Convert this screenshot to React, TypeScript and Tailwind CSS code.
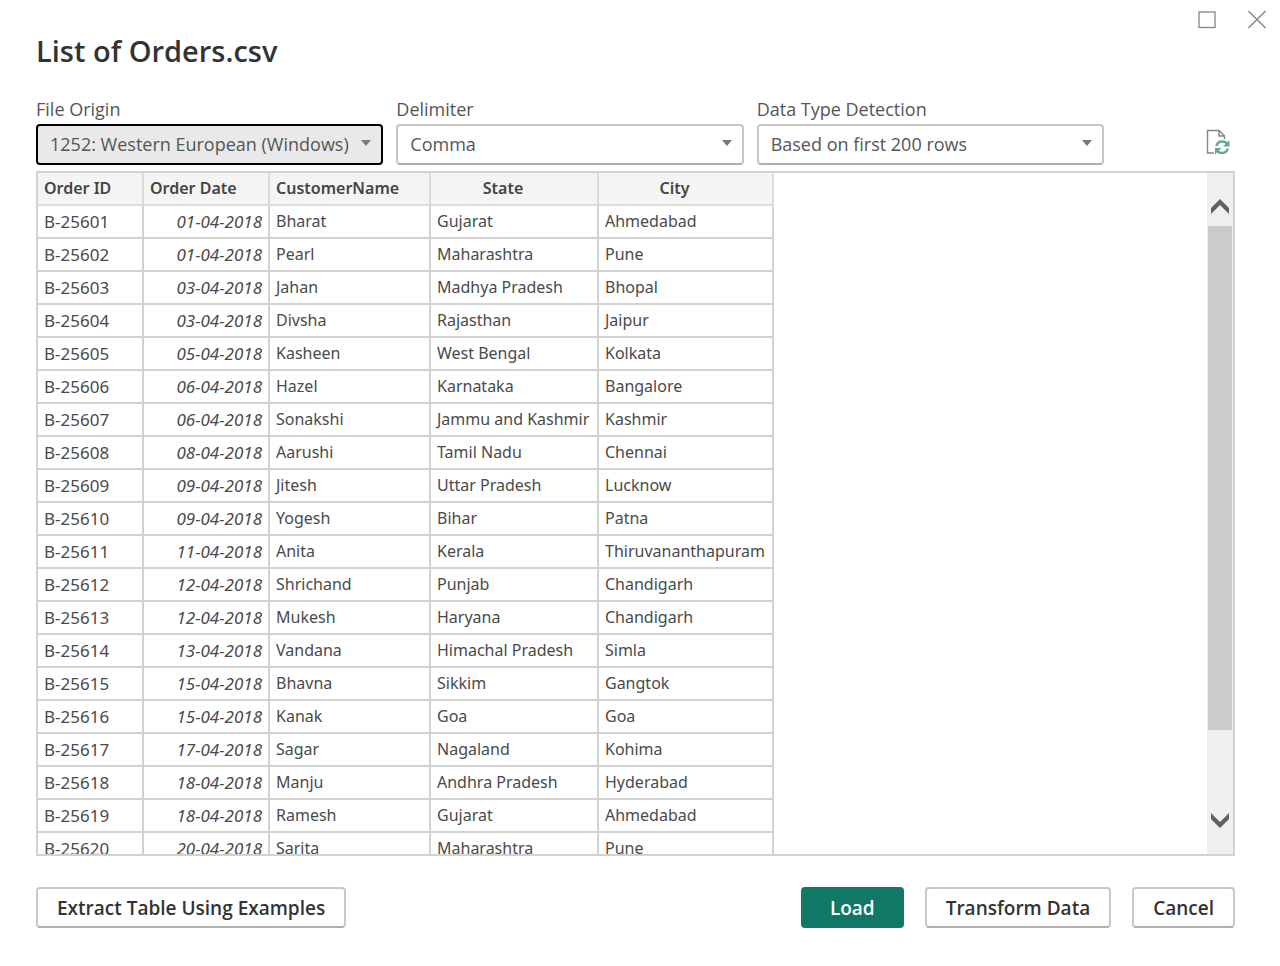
import type { ReactNode } from "react";

type Order = [id: string, date: string, customer: string, state: string, city: string];

const orders: Order[] = [
  ["B-25601", "01-04-2018", "Bharat", "Gujarat", "Ahmedabad"],
  ["B-25602", "01-04-2018", "Pearl", "Maharashtra", "Pune"],
  ["B-25603", "03-04-2018", "Jahan", "Madhya Pradesh", "Bhopal"],
  ["B-25604", "03-04-2018", "Divsha", "Rajasthan", "Jaipur"],
  ["B-25605", "05-04-2018", "Kasheen", "West Bengal", "Kolkata"],
  ["B-25606", "06-04-2018", "Hazel", "Karnataka", "Bangalore"],
  ["B-25607", "06-04-2018", "Sonakshi", "Jammu and Kashmir", "Kashmir"],
  ["B-25608", "08-04-2018", "Aarushi", "Tamil Nadu", "Chennai"],
  ["B-25609", "09-04-2018", "Jitesh", "Uttar Pradesh", "Lucknow"],
  ["B-25610", "09-04-2018", "Yogesh", "Bihar", "Patna"],
  ["B-25611", "11-04-2018", "Anita", "Kerala", "Thiruvananthapuram"],
  ["B-25612", "12-04-2018", "Shrichand", "Punjab", "Chandigarh"],
  ["B-25613", "12-04-2018", "Mukesh", "Haryana", "Chandigarh"],
  ["B-25614", "13-04-2018", "Vandana", "Himachal Pradesh", "Simla"],
  ["B-25615", "15-04-2018", "Bhavna", "Sikkim", "Gangtok"],
  ["B-25616", "15-04-2018", "Kanak", "Goa", "Goa"],
  ["B-25617", "17-04-2018", "Sagar", "Nagaland", "Kohima"],
  ["B-25618", "18-04-2018", "Manju", "Andhra Pradesh", "Hyderabad"],
  ["B-25619", "18-04-2018", "Ramesh", "Gujarat", "Ahmedabad"],
  ["B-25620", "20-04-2018", "Sarita", "Maharashtra", "Pune"],
];

const columns = [
  { name: "Order ID", width: "w-[106px]", align: "text-left", cell: "pl-[6px] text-[17px]" },
  { name: "Order Date", width: "w-[126px]", align: "text-left", cell: "pr-[6px] text-right text-[17px] italic" },
  { name: "CustomerName", width: "w-[161px]", align: "text-left", cell: "pl-[6px] text-[16px]" },
  { name: "State", width: "w-[168px]", align: "text-center pr-7", cell: "pl-[6px] text-[16px]" },
  { name: "City", width: "w-[175px]", align: "text-center pr-7", cell: "pl-[6px] text-[16px]" },
];

function SelectField({ id, label, value, focused = false }: { id: string; label: string; value: string; focused?: boolean }) {
  return (
    <div className="flex min-w-0 flex-1 flex-col">
      <label htmlFor={id} className="text-[18px] leading-[30px] text-[#555]">
        {label}
      </label>
      <div className="relative">
        <select
          id={id}
          className={
            "h-[41px] w-full appearance-none rounded-[4px] border-2 pl-3 pr-8 text-[18px] text-[#555] outline-none " +
            (focused ? "border-black bg-[#e9e9e9]" : "border-[#c6c6c6] border-b-[#b0b0b0] bg-white")
          }
        >
          <option>{value}</option>
        </select>
        <svg className="pointer-events-none absolute right-3 top-4 h-[6px] w-[10px]" viewBox="0 0 10 6" aria-hidden="true">
          <path d="M0 0H10L5 6Z" fill="#7a7a7a" />
        </svg>
      </div>
    </div>
  );
}

function ActionButton({ children, primary = false }: { children: ReactNode; primary?: boolean }) {
  return (
    <button
      type="button"
      className={
        "h-[41px] rounded-[4px] border-2 pt-px text-[19px] font-semibold " +
        (primary
          ? "border-[#117865] bg-[#117865] px-[27px] text-white"
          : "border-[#c8c8c8] border-b-[#b0b0b0] bg-white px-[19px] text-[#333]")
      }
    >
      {children}
    </button>
  );
}

export default function App() {
  return (
    <main className="flex h-screen flex-col bg-white pb-[38px] pl-9 pr-[45px] font-['Open_Sans','Noto_Sans',sans-serif]">
      <div className="-mr-[34px] flex h-8 shrink-0 items-end justify-end gap-[26px]">
        <button type="button" aria-label="Maximize" className="flex h-6 w-6 items-center justify-center">
          <svg className="h-5 w-5" viewBox="0 0 20 20" aria-hidden="true">
            <rect x="2" y="2" width="16" height="15.500" fill="none" stroke="#858585" strokeWidth="1.300" />
          </svg>
        </button>
        <button type="button" aria-label="Close" className="flex h-6 w-6 items-center justify-center">
          <svg className="h-5 w-5" viewBox="0 0 20 20" aria-hidden="true">
            <path d="M1.500 1L18.500 18M18.500 1L1.500 18" fill="none" stroke="#8a8a8a" strokeWidth="1.500" />
          </svg>
        </button>
      </div>
      <h1 className="shrink-0 text-[29px] font-semibold leading-[38px] text-[#333]">List of Orders.csv</h1>

      <div className="mt-6 flex shrink-0 items-end justify-between">
        <div className="flex w-[1068px] gap-[13px]">
          <SelectField id="origin" label="File Origin" value="1252: Western European (Windows)" focused />
          <SelectField id="delimiter" label="Delimiter" value="Comma" />
          <SelectField id="detection" label="Data Type Detection" value="Based on first 200 rows" />
        </div>
        <button type="button" aria-label="Refresh preview" className="mb-[10px] mr-[5px]">
          <svg className="h-[26px] w-6" viewBox="0 0 24 26" fill="none" aria-hidden="true">
            <path d="M8 24H1.500V1.500H13L18.500 7V10" stroke="#858585" strokeWidth="1.400" />
            <path d="M13 1.500V7H18.500" stroke="#858585" strokeWidth="1.400" />
            <path d="M10.500 17C11.200 14.200 13.500 12.600 16.200 12.600C18.500 12.600 20.300 13.600 21.300 15" stroke="#66a88f" strokeWidth="2.500" />
            <path d="M23.500 11V17.500H17Z" fill="#66a88f" />
            <path d="M21.800 19.500C21.100 22.300 18.800 23.900 16.100 23.900C13.800 23.900 12 22.900 11 21.500" stroke="#66a88f" strokeWidth="2.500" />
            <path d="M9 25.500V19H15.500Z" fill="#66a88f" />
          </svg>
        </button>
      </div>

      <section className="mt-[6px] flex min-h-0 flex-1 border-2 border-[#d2d2d2]" aria-label="Data preview">
        <div className="min-w-0 flex-1 overflow-hidden">
          <table className="w-[736px] table-fixed border-separate border-spacing-0 font-['Noto_Sans','Open_Sans',sans-serif] text-[16px] text-[#4a4a4a]">
            <thead>
              <tr>
                {columns.map((column) => (
                  <th
                    key={column.name}
                    className={`${column.width} ${column.align} h-[33px] whitespace-nowrap border-b-2 border-r-2 border-[#dcdcdc] bg-[#f4f4f4] py-0 pl-[6px] font-semibold leading-[31px] text-[#444]`}
                  >
                    {column.name}
                  </th>
                ))}
              </tr>
            </thead>
            <tbody>
              {orders.map((order) => (
                <tr key={order[0]}>
                  {order.map((value, index) => (
                    <td
                      key={index}
                      className={`h-[33px] whitespace-nowrap border-b-2 border-r-2 border-[#d2d2d2] py-0 leading-[31px] ${columns[index].cell}`}
                    >
                      {value}
                    </td>
                  ))}
                </tr>
              ))}
            </tbody>
          </table>
        </div>
        <div className="flex w-[26px] flex-col bg-[#efefef] pl-px pr-px">
          <button type="button" aria-label="Scroll up" className="flex h-[53px] shrink-0 items-end justify-center pb-3">
            <svg className="h-[15px] w-[18px]" viewBox="0 0 18 15" aria-hidden="true">
              <path d="M9 0L18 9V15L9 6L0 15V9Z" fill="#606060" />
            </svg>
          </button>
          <div className="flex flex-1 flex-col">
            <div className="h-[87%] bg-[#cbcbcb]" />
          </div>
          <button type="button" aria-label="Scroll down" className="flex h-[49px] shrink-0 items-start justify-center pt-2">
            <svg className="h-[15px] w-[18px]" viewBox="0 0 18 15" aria-hidden="true">
              <path d="M9 15L18 6V0L9 9L0 0V6Z" fill="#606060" />
            </svg>
          </button>
        </div>
      </section>

      <footer className="mt-[31px] flex shrink-0 items-center justify-between">
        <ActionButton>Extract Table Using Examples</ActionButton>
        <div className="flex gap-[21px]">
          <ActionButton primary>Load</ActionButton>
          <ActionButton>Transform Data</ActionButton>
          <ActionButton>Cancel</ActionButton>
        </div>
      </footer>
    </main>
  );
}
